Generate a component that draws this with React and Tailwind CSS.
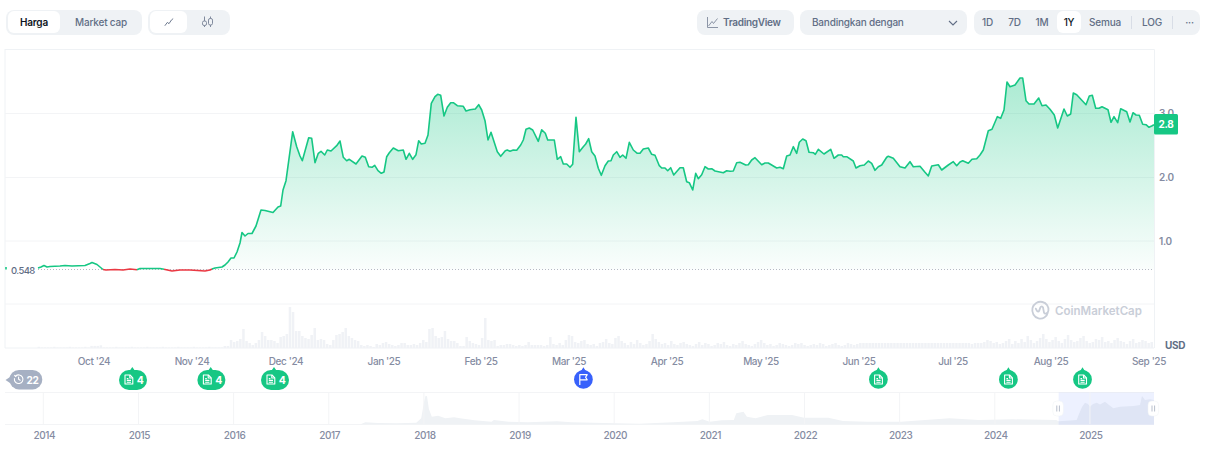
const greenA = [[38,268],[41,267],[44,265.5],[47,267],[50,266.5],[60,266],[65,265.5],[72,266],[85,265.5],[90,263.5],[92,262.5],[97,264.5],[100,267],[103,269.5]];
const redA = [[103,269.5],[106,270],[115,269.5],[123,270],[130,269],[137,269.7]];
const greenB = [[137,269.7],[140,268.5],[150,268.5],[160,268.5],[164,269.2]];
const redB = [[164,269.2],[172,271],[180,270],[190,270],[205,271],[210,270],[212,269]];
const greenC = [[212,269],[215,268],[222,267],[225,265],[228,262],[231,258],[234,258],[237,252],[240,243],[242,232.5],[245,236],[248,233.5],[252,233.5],[256,226],[261,210],[265,210.5],[273,212.5],[278,207],[280.7,206],[283,190],[286,180.7],[292.7,131.7],[296.7,146.7],[300,156],[302.3,160.7],[308.7,137.7],[311.7,138.3],[315,162.7],[318.3,153.3],[321,151.3],[324.7,155],[327.3,150],[331,151],[336.7,145.7],[340,141],[343.3,157.3],[346.7,160.7],[349.3,159.3],[356,164],[362,156],[365.3,157.3],[368.7,166.7],[372,167.3],[374.7,165.3],[378,170.7],[381.3,173.3],[384,172],[386.7,156.7],[389.3,152.7],[393.3,148],[398.3,150.7],[403.3,150],[406,159.3],[409.3,153.3],[412.7,159.3],[416,154.7],[418.7,140.7],[421.3,144],[425,143.3],[428,135],[431.3,103.3],[435,96.7],[437.7,94.3],[440.7,95.3],[444,116],[447.3,107.3],[450.7,102.7],[453.3,102.7],[457.3,105.7],[463.3,106.3],[466,111],[470,109.7],[475.3,109],[478.7,104.7],[481.7,110],[485,120.7],[488,140],[491,132.3],[497.3,151.7],[500.7,156.3],[505.3,150.7],[507.3,150],[510,151.3],[513.3,150],[516.7,150.3],[520.7,145],[523.3,140],[526,129.3],[529.3,128],[532.7,130],[538.3,141.3],[541.7,129.7],[545.3,133.3],[547.7,140],[554.3,140],[557.3,159.3],[560.7,156.7],[563.3,164],[566.7,164],[570,167.3],[572.7,164.3],[576,117.3],[579.3,151.7],[583.3,146.7],[585.7,144],[588.7,138.7],[591.7,151.7],[595,156],[598.3,168.3],[601.3,175.3],[605,165.7],[608.3,161],[611,160.7],[613.3,155],[616.7,151.7],[620,157.3],[622.7,155],[626,158.3],[629.3,142.3],[633.3,150],[637.3,153.3],[640,153.3],[643.3,149],[648.3,148],[651.7,154.3],[655,155.3],[659.3,165.7],[661.7,168],[665,168],[667.7,170.7],[670.7,167.7],[673.7,175],[680,167.7],[683.3,167.7],[686.7,181.7],[689.3,182.7],[692.7,190],[695.7,173.3],[698.3,178.7],[701.7,174.7],[705,166.7],[708.3,169],[711.7,168.7],[715,171],[723.3,172.7],[726.7,170.7],[730,171.3],[733.3,171],[736.7,162.7],[740,162.3],[745.7,165],[748.3,164.7],[751.7,160],[755,157.7],[761.7,164.7],[765,163],[768.3,163],[776.7,168],[780,167.3],[783.3,168.7],[786.7,156],[790,155],[793.3,146.7],[796.7,153.3],[799.3,142.3],[802.7,139],[806,140.7],[809,152.3],[813.3,152.7],[815.3,154.3],[818.3,149.3],[824,154],[830.7,149.3],[834,158.3],[838.3,155],[841.7,155],[843.3,156.7],[846.7,156.7],[853.3,161],[856,168],[860,165.7],[864.3,165],[868.3,161],[871.7,163.3],[875,170.3],[878.3,166.7],[881.7,165],[886.7,157.3],[888.3,156.3],[893.3,158.3],[900,166.7],[905,168],[910,161.7],[913.3,166.7],[920,166.3],[925,172.3],[928.3,176],[931.7,166],[938.3,164.7],[941.7,170],[948.3,165],[953.3,161.7],[956.7,165.7],[960,162],[962.7,160.7],[968.3,163.3],[972,159.3],[976.7,158.7],[980,155],[983.3,150],[988.3,130.7],[992,129.3],[997.3,116.7],[1000.7,118.3],[1004,110],[1007,82],[1010,86.7],[1015,85],[1020,78],[1022.7,78],[1026,100.7],[1029,104],[1034,104],[1038.7,98],[1042,105.7],[1046,105],[1050,109.3],[1054.3,115],[1057.7,128],[1064,109],[1067.3,116],[1070.7,114],[1073.3,93],[1076.7,94.7],[1086,104.7],[1089.3,96],[1092.3,95.3],[1095.7,108.3],[1099,108.3],[1102,106.7],[1108,109.7],[1111,122.3],[1114,116.7],[1117.7,122.7],[1120.7,108.7],[1126.7,111.7],[1130,122],[1133,112.7],[1136,115],[1139.3,115.3],[1142.7,124.3],[1146,124.7],[1149,127.3],[1151.7,126],[1154,124.7]];

const pts = (a) => a.map((p) => p.join(",")).join(" ");
const BASE = 269.5;

const volMain = [2,2,8,6,7,9,19,7,5,3,5,8,16,12,8,8,7,5,11,12,14,41,36,17,17,12,10,9,13,20,8,9,8,4,3,8,13,14,16,20,12,10,8,7,3,2,3,2,1,4,3,5,6,4,3,2,3,5,5,3,3,4,3,5,8,6,19,20,12,10,11,17,9,7,7,5,2,2,11,7,5,4,3,10,30,8,7,8,2,3,3,4,4,3,2,3,2,3,6,3,3,3,3,2,3,11,4,3,5,3,8,13,12,6,5,7,8,4,3,4,2,5,6,9,5,4,10,12,7,5,3,6,4,8,5,3,4,7,14,9,6,4,5,3,7,4,3,5,6,4,3,2,4,6,3,5,4,2,3,5,4,6,3,2,4,3,5,7,4,3,2,4,6,8,5,3,4,2,3,5,4,3,2,3,5,4,6,3,2,3,4,3,5,4,2,3,4,6,3,2,3,5,4,3];
const volEnd = [4,7,5,9,6,12,8,5,7,10,14,9,6,8,11,7,5,9,13,8,6,7,10,12,7,5,6,9,8,11,6,7,5,8,10,7,6,4,7,9,5,6,8,7,5,6,4,5,7,9];
const bars = [];
for (let i = 0; 37.6 + i * 3.1 < 1153; i++) {
  const x = 37.6 + i * 3.1;
  const j = i - 60;
  let h;
  if (j < 0) h = (i % 5 === 0 ? 1.2 : 0.6) + (x > 90 && x < 100 ? 1.5 : 0);
  else {
    h = j < volMain.length ? volMain[j] : volEnd[(j - volMain.length) % volEnd.length];
    if (x > 800 && x < 980) h = Math.min(h, 5);
  }
  bars.push([x, h]);
}

const conv = (a) => a.map(([X, Y]) => [+(300 + X / 2.063).toFixed(1), +(385 + Y / 3).toFixed(1)]);
const miniL = conv([[125,118],[135,112],[160,114],[200,115],[240,113],[250,100],[256,50],[259,32],[262,34],[266,72],[272,95],[285,92],[300,100],[318,97],[330,100],[360,106],[395,110],[400,105],[430,110],[470,112],[530,109],[560,112],[650,115],[700,116],[770,112],[820,108],[830,103],[845,110],[870,106],[895,105],[900,85],[915,80],[922,95],[940,100],[965,90],[990,90],[1015,90],[1040,98],[1090,98],[1120,108],[1170,110],[1240,110],[1340,100],[1400,105],[1470,103],[1560,105]]);
const miniR = [[1058.7,421.3],[1070,420.5],[1076.7,420],[1079,414],[1082,407],[1085,402.7],[1088,404],[1090,406.7],[1093,404],[1096.7,402.7],[1100,404.5],[1105,401.7],[1109,405],[1113.3,408.3],[1120,406.7],[1133.3,406],[1140,405],[1142,396],[1145,400],[1150,399.3],[1154,400]];
const miniAll = `300,424.3 ${pts(miniL)} 1058.7,421.3 1058.7,424.3`;

const months = [["Oct '24",94],["Nov '24",192],["Dec '24",286],["Jan '25",384],["Feb '25",481],["Mar '25",569],["Apr '25",667],["May '25",761],["Jun '25",859],["Jul '25",953],["Aug '25",1051],["Sep '25",1149]];
const years = [2014,2015,2016,2017,2018,2019,2020,2021,2022,2023,2024,2025];
const yearX = (i) => 43.3 + i * 95.15;

function Doc({ x, y }) {
  return (
    <g transform={`translate(${x} ${y})`} fill="none" stroke="#fff" strokeWidth="1.1" strokeLinejoin="round">
      <path d="M0.6 0.6H5.6L8.4 3.4V9.6H0.6Z" />
      <path d="M5.4 0.6V3.6H8.4" />
      <path d="M2.4 4.2H4M2.4 6H6.6M2.4 7.8H6.6" />
    </g>
  );
}

function WidePin({ l, tip }) {
  return (
    <g>
      <rect x={l} y="370" width="28" height="20" rx="10" fill="#16c784" />
      <path d={`M${tip - 5} 371.5Q${tip - 1.5} 370.5 ${tip} 367Q${tip + 1.5} 370.5 ${tip + 5} 371.5Z`} fill="#16c784" />
      <Doc x={l + 5.4} y={374.4} />
      <text x={l + 17.8} y="383.6" fill="#fff" className="text-[10.5px] font-bold">4</text>
    </g>
  );
}

function RoundPin({ c, color = "#16c784", flag }) {
  return (
    <g>
      <circle cx={c} cy="379.4" r="9.4" fill={color} />
      <path d={`M${c - 5} 372.5Q${c - 1.5} 371 ${c} 367.2Q${c + 1.5} 371 ${c + 5} 372.5Z`} fill={color} />
      {flag ? (
        <g fill="none" stroke="#fff" strokeWidth="1.2" strokeLinejoin="round">
          <path d={`M${c - 3.6} 385V374.6H${c + 3.8}L${c + 2.2} 377.2L${c + 3.8} 379.8H${c - 3.6}`} />
        </g>
      ) : (
        <Doc x={c - 4.4} y={374.4} />
      )}
    </g>
  );
}

function Handle({ x }) {
  return (
    <g>
      <rect x={x} y="401" width="10.6" height="15" rx="4" fill="#fff" stroke="#eff2f5" strokeWidth="0.5" />
      <path d={`M${x + 4} 405.5V411.5M${x + 6.6} 405.5V411.5`} stroke="#b8bfcc" strokeWidth="1" />
    </g>
  );
}

function Chart() {
  const axis = "text-[10px] font-medium tracking-[-0.4px]";
  return (
    <svg width="1207" height="404" viewBox="0 49 1207 404" className="block">
      <defs>
        <linearGradient id="up" gradientUnits="userSpaceOnUse" x1="0" y1="78" x2="0" y2="269.5">
          <stop offset="0" stopColor="#16c784" stopOpacity="0.36" />
          <stop offset="1" stopColor="#16c784" stopOpacity="0.02" />
        </linearGradient>
      </defs>

      <path d="M5 49.5H1154.5V348M5 49V348" fill="none" stroke="#eff2f5" strokeWidth="1" />
      {[113.5, 177.5, 241, 304].map((y) => (
        <path key={y} d={`M5 ${y}H1154`} stroke="#f3f4f6" strokeWidth="1" />
      ))}
      <path d="M5 348H1154" stroke="#eff2f5" strokeWidth="1" />

      {bars.map(([x, h], i) => (
        <rect key={i} x={x.toFixed(2)} y={348 - h} width="2.5" height={h} fill="#f0f2f6" />
      ))}

      <polygon points={`212,${BASE} ${pts(greenC)} 1154,${BASE}`} fill="url(#up)" />
      <polygon points={`103,${BASE} ${pts(redA.concat(greenB.slice(1)))}`} fill="#ea3943" fillOpacity="0.08" />
      <polygon points={`164,${BASE} ${pts(redB)}`} fill="#ea3943" fillOpacity="0.1" />

      <path d={`M38 ${BASE}H1154`} stroke="#b5bac4" strokeWidth="1" strokeDasharray="1 2" />

      <polyline points={pts(greenA)} fill="none" stroke="#16c784" strokeWidth="1.6" strokeLinejoin="round" />
      <polyline points={pts(redA)} fill="none" stroke="#ea3943" strokeWidth="1.6" strokeLinejoin="round" />
      <polyline points={pts(greenB)} fill="none" stroke="#16c784" strokeWidth="1.6" strokeLinejoin="round" />
      <polyline points={pts(redB)} fill="none" stroke="#ea3943" strokeWidth="1.6" strokeLinejoin="round" />
      <polyline points={pts(greenC)} fill="none" stroke="#16c784" strokeWidth="1.6" strokeLinejoin="round" />

      <path d="M6 267V269.5" stroke="#16c784" strokeWidth="1.6" />
      <text x="11" y="274" fill="#616e85" className="text-[9.5px] font-medium tracking-[-0.6px]">0.548</text>

      {[["3.0", 113], ["2.0", 177], ["1.0", 241]].map(([t, y]) => (
        <text key={t} x="1159" y={y + 3.6} fill="#858ca2" className="text-[10px] font-semibold tracking-[-0.3px]">{t}</text>
      ))}
      <rect x="1154" y="114" width="24" height="20.6" rx="1.5" fill="#16c784" />
      <text x="1166" y="128" textAnchor="middle" fill="#fff" className="text-[10px] font-bold tracking-[-0.3px]">2.8</text>
      <text x="1165" y="349" fill="#616e85" className="text-[10px] font-bold tracking-[-0.3px]">USD</text>

      <g fill="none" stroke="#c9ced8" strokeWidth="1.8">
        <path d="M1047.8 312.5C1047 317 1042.5 319.6 1038.5 318.4C1034 317.2 1031.4 312.6 1032.5 308C1033.7 303.6 1038 301 1042.4 302C1046.6 303 1049 307 1048.4 310.6C1048 313.4 1045 314.6 1044 312.6L1043 307.4C1042.4 306 1041 306 1040.4 307.4L1039.2 310.6C1038.7 312 1037.4 312 1036.8 310.7L1035.8 308.6" strokeLinecap="round" strokeLinejoin="round" />
      </g>
      <text x="1055" y="314.8" fill="#c9ced8" className="text-[11.5px] font-semibold">CoinMarketCap</text>

      {months.map(([t, x]) => (
        <text key={t} x={x} y="365" textAnchor="middle" fill="#858ca2" className={axis}>{t}</text>
      ))}

      <path d="M10 377L5.5 380L10 383Z" fill="#a6b0c3" />
      <rect x="9.3" y="370" width="33" height="19.4" rx="9.7" fill="#a6b0c3" />
      <g fill="none" stroke="#fff" strokeWidth="1.1" strokeLinecap="round">
        <path d="M14.4 378.6A4.3 4.3 0 1 0 15.6 376.2" />
        <path d="M14.6 375.4L15.5 376.4L16.6 375.6" />
        <path d="M18.6 377V379.3L20.2 380.2" />
      </g>
      <text x="26.6" y="383.6" fill="#fff" className="text-[10px] font-bold tracking-[-0.5px]">22</text>

      <WidePin l={119} tip={132.3} />
      <WidePin l={197.4} tip={210.7} />
      <WidePin l={261} tip={274} />
      <RoundPin c={583.4} color="#3861fb" flag />
      <RoundPin c={878.4} />
      <RoundPin c={1008.4} />
      <RoundPin c={1082.5} />

      <path d="M5 392.5H1154M5 424.5H1154" stroke="#f3f4f6" strokeWidth="1" />
      <polygon points={miniAll} fill="#eff2f5" />
      <rect x="1058.7" y="392.5" width="95.3" height="32" fill="#3861fb" fillOpacity="0.09" />
      <polygon points={`1058.7,424.5 ${pts(miniR)} 1154,424.5`} fill="#dfe5f5" />
      {years.map((y, i) => (
        <path key={y} d={`M${yearX(i)} 392.5V424`} stroke="#f3f4f6" strokeWidth="1" />
      ))}
      {years.map((y, i) => (
        <text key={y} x={yearX(i) + 1} y="438.5" textAnchor="middle" fill="#858ca2" className={axis}>{y}</text>
      ))}
      <Handle x={1052.8} />
      <Handle x={1148} />
    </svg>
  );
}

export default function App() {
  const btn = "flex items-center justify-center text-[10px] font-medium text-[#616e85] tracking-[-0.2px]";
  return (
    <div className="w-[1207px] h-[453px] overflow-hidden bg-white font-['Inter',sans-serif]">
      <div className="flex justify-between pt-[10px] pl-[6px] pr-[7px] h-[49px]">
        <div className="flex gap-[6px]">
          <div className="flex h-[25px] w-[136px] rounded-lg bg-[#eff2f5] p-[2px] pt-[1px] pb-[2px]">
            <div className="w-[52px] rounded-md bg-white flex items-center justify-center text-[10px] font-semibold text-[#0d1421] tracking-[-0.2px]">Harga</div>
            <div className={`flex-1 pl-[2px] ${btn}`}>Market cap</div>
          </div>
          <div className="flex h-[25px] w-[82px] rounded-lg bg-[#eff2f5] p-[2px] pt-[1px] pb-[2px]">
            <div className="w-[37px] rounded-md bg-white flex items-center justify-center">
              <svg width="10" height="10" viewBox="0 0 12 12" fill="none" stroke="#616e85" strokeWidth="1.1">
                <path d="M1 10.5L4 6.5L6 8L9 3.5L11 2" />
              </svg>
            </div>
            <div className="flex-1 flex items-center justify-center">
              <svg width="13" height="12" viewBox="0 0 13 12" fill="none" stroke="#808a9d" strokeWidth="1">
                <path d="M3.5 0.5V11M9.5 0.5V11" />
                <rect x="1.5" y="5" width="4" height="4.5" rx="1.6" fill="#eff2f5" />
                <rect x="7.5" y="2.5" width="4" height="6.5" rx="1.6" fill="#eff2f5" />
              </svg>
            </div>
          </div>
        </div>
        <div className="flex gap-[6px]">
          <div className="flex h-[25px] w-[97px] items-center rounded-lg bg-[#eff2f5] pl-[10px] gap-[5px]">
            <svg width="11" height="11" viewBox="0 0 11 11" fill="none" stroke="#808a9d" strokeWidth="0.9">
              <path d="M0.5 0V10.5H11M1.5 9L5 4.5L6.5 6.5L10.5 1.5" />
            </svg>
            <span className="text-[10px] font-semibold text-[#616e85] tracking-[-0.3px]">TradingView</span>
          </div>
          <div className="flex h-[25px] w-[167px] items-center justify-between rounded-lg bg-[#eff2f5] pl-[12px] pr-[9px]">
            <span className="text-[10px] font-medium text-[#616e85] tracking-[-0.2px]">Bandingkan dengan</span>
            <svg width="10" height="10" viewBox="0 0 10 10" fill="none" stroke="#616e85" strokeWidth="1.1">
              <path d="M1 3L5 7L9 3" />
            </svg>
          </div>
          <div className="flex h-[25px] w-[226px] ml-px items-center rounded-lg bg-[#eff2f5] pl-[7px] py-[1px] pb-[2px]">
            <div className={`w-[13px] h-full ${btn}`}>1D</div>
            <div className={`w-[13px] h-full ml-[14px] ${btn}`}>7D</div>
            <div className={`w-[14px] h-full ml-[14px] ${btn}`}>1M</div>
            <div className="w-[24px] h-full ml-[8px] rounded-md bg-white flex items-center justify-center text-[10px] font-medium text-[#0d1421] tracking-[-0.2px]">1Y</div>
            <div className={`w-[32px] h-full ml-[8px] ${btn}`}>Semua</div>
            <div className="w-px h-[13px] ml-[10px] bg-[#d8dde6]" />
            <div className={`w-[20px] h-full ml-[10px] ${btn}`}>LOG</div>
            <div className="w-px h-[13px] ml-[10px] bg-[#d8dde6]" />
            <div className={`w-[11px] h-full ml-[11px] ${btn}`}>···</div>
          </div>
        </div>
      </div>
      <Chart />
    </div>
  );
}
